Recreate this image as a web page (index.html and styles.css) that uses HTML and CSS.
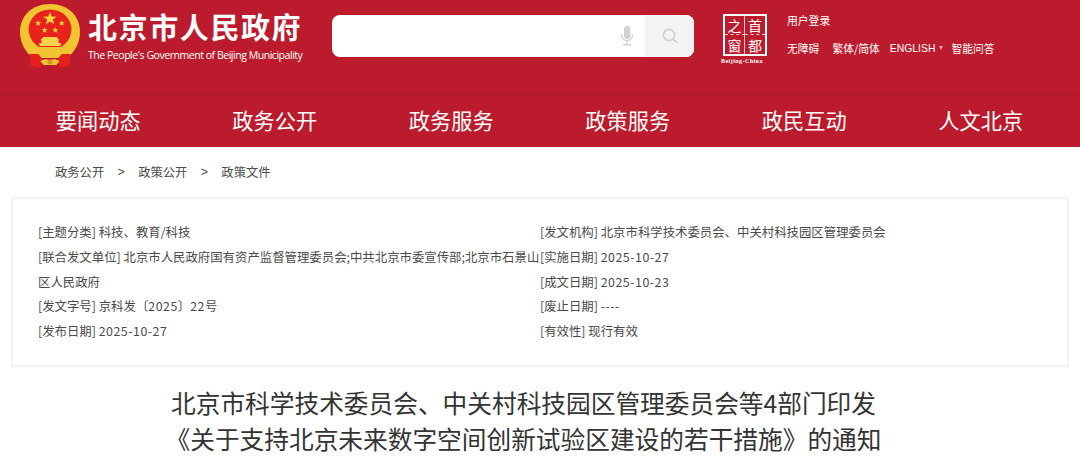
FILE: index.html
```html
<!DOCTYPE html>
<html lang="zh-CN">

<head>
    <meta charset="utf-8">
    <title>北京市人民政府</title>
    <meta name="viewport" content="width=device-width, initial-scale=1">
    <link rel="stylesheet" href="styles.css">
</head>

<body>
    <header class="top-bar">
        <a class="brand" href="#">
            <svg class="emblem" viewBox="2 0 56 64" width="60" height="64" preserveAspectRatio="none">
                <path d="M30 0C13 0 2 12 2 28c0 11 5 20 12 26h32c7-6 12-15 12-26C58 12 47 0 30 0z" fill="#f2c431" />
                <ellipse cx="30" cy="25.5" rx="20" ry="20" fill="#e8231b" />
                <polygon points="30,8 31.6,12.6 36.4,12.7 32.6,15.6 34,20.2 30,17.5 26,20.2 27.4,15.6 23.6,12.7 28.4,12.6" fill="#f8d83c" />
                <polygon points="19,16 19.8,18.2 22,18.2 20.2,19.6 20.9,21.8 19,20.5 17.1,21.8 17.8,19.6 16,18.2 18.2,18.2" fill="#f8d83c" />
                <polygon points="41,16 41.8,18.2 44,18.2 42.2,19.6 42.9,21.8 41,20.5 39.1,21.8 39.8,19.6 38,18.2 40.2,18.2" fill="#f8d83c" />
                <polygon points="25,23 25.8,25.2 28,25.2 26.2,26.6 26.9,28.8 25,27.5 23.1,28.8 23.8,26.6 22,25.2 24.2,25.2" fill="#f8d83c" />
                <polygon points="35,23 35.8,25.2 38,25.2 36.2,26.6 36.9,28.8 35,27.5 33.1,28.8 33.8,26.6 32,25.2 34.2,25.2" fill="#f8d83c" />
                <path d="M24 33h12l3 3h-1v3h2v3H20v-3h2v-3h-1z" fill="#f8d24a" />
                <path d="M7 41l8 2h30l8-2-3 7-8 3H18l-8-3z" fill="#f2c431" />
                <path d="M11 50h8l4 5-2 9-9-2zM49 50h-8l-4 5 2 9 9-2z" fill="#e2201c" />
                <path d="M19 49c3-3 8-4 11-4s8 1 11 4l-4 4H23z" fill="#f2c431" />
                <path d="M21 57c3-2 6-2 9-1 3-1 6-1 9 1l-3 4H24z" fill="#f2c431" />
                <circle cx="30" cy="58" r="2.5" fill="#d8971f" />
            </svg>
            <div class="brand-text">
                <div class="brand-cn">北京市人民政府</div>
                <div class="brand-en">The People's Government of Beijing Municipality</div>
            </div>
        </a>

        <form class="search">
            <div class="search-field">
                <svg viewBox="0 0 14 20" width="14" height="20">
                    <rect x="4" y="0" width="6.4" height="13" rx="3.2" fill="#d2d2d2" />
                    <path d="M1.5 8.5c0 8 11 8 11 0" fill="none" stroke="#d2d2d2" stroke-width="1.4" />
                    <rect x="6.3" y="15" width="1.4" height="3" fill="#d2d2d2" />
                    <rect x="3" y="18" width="8" height="1.6" fill="#d2d2d2" />
                </svg>
            </div>
            <div class="search-btn">
                <svg viewBox="0 0 18 18" width="18" height="18">
                    <circle cx="8" cy="8" r="5.6" fill="none" stroke="#cfcfcf" stroke-width="1.7" />
                    <path d="M12.2 12.2l4 3.3" stroke="#cfcfcf" stroke-width="1.9" fill="none" />
                </svg>
            </div>
        </form>

        <div class="capital">
            <div class="capital-box">
                <span>之</span><span>首</span><span>窗</span><span>都</span>
            </div>
            <div class="capital-en">Beijing-China</div>
        </div>

        <div class="links">
            <a href="#">用户登录</a>
            <div class="links-row">
                <a href="#">无障碍</a>
                <a href="#">繁体/简体</a>
                <a href="#" class="lang">ENGLISH<i class="caret"></i></a>
                <a href="#">智能问答</a>
            </div>
        </div>
    </header>

    <nav class="main-nav">
        <a href="#">要闻动态</a>
        <a href="#">政务公开</a>
        <a href="#">政务服务</a>
        <a href="#">政策服务</a>
        <a href="#">政民互动</a>
        <a href="#">人文北京</a>
    </nav>

    <div class="crumbs">
        <a href="#">政务公开</a>
        <span>&gt;</span>
        <a href="#">政策公开</a>
        <span>&gt;</span>
        <a href="#">政策文件</a>
    </div>

    <section class="doc-info">
        <ul class="info-col">
            <li>[主题分类] 科技、教育/科技</li>
            <li>[联合发文单位] 北京市人民政府国有资产监督管理委员会;中共北京市委宣传部;北京市石景山区人民政府</li>
            <li>[发文字号] 京科发〔<span class="num">2025</span>〕<span class="num">22</span>号</li>
            <li>[发布日期] <span class="num">2025-10-27</span></li>
        </ul>
        <ul class="info-col">
            <li>[发文机构] 北京市科学技术委员会、中关村科技园区管理委员会</li>
            <li>[实施日期] <span class="num">2025-10-27</span></li>
            <li>[成文日期] <span class="num">2025-10-23</span></li>
            <li>[废止日期] <span class="num">----</span></li>
            <li>[有效性] 现行有效</li>
        </ul>
    </section>

    <h1 class="doc-title">北京市科学技术委员会、中关村科技园区管理委员会等4部门印发<br>《关于支持北京未来数字空间创新试验区建设的若干措施》的通知</h1>
</body>

</html>
```

FILE: styles.css
```css
* {
    margin: 0;
    padding: 0;
    box-sizing: border-box;
}

html {
    overflow: hidden;
}

body {
    font: 12px "Noto Sans CJK SC", "Noto Sans", sans-serif;
    color: #4a4a4a;
    background: #fff;
}

a {
    color: inherit;
    text-decoration: none;
}

ul {
    list-style: none;
}

.top-bar {
    height: 95px;
    background: #bc1b2d;
    border-bottom: 1px solid #aa1929;
    display: flex;
    align-items: flex-start;
    color: #fff;
    padding: 4px 0 0 20px;
}

.brand {
    display: flex;
    width: 312px;
    flex-shrink: 0;
}

.emblem {
    flex-shrink: 0;
}

.brand-text {
    margin-left: 8px;
}

.brand-cn {
    font-size: 29px;
    font-weight: 700;
    line-height: 36px;
    letter-spacing: 1.6px;
    margin-top: 4px;
}

.brand-en {
    font: 10.5px/14px "Open Sans", sans-serif;
    letter-spacing: -.46px;
    margin-top: 4px;
    white-space: nowrap;
}

.search {
    width: 362px;
    height: 42px;
    margin-top: 11px;
    background: #fff;
    border-radius: 8px;
    overflow: hidden;
    display: flex;
    flex-shrink: 0;
}

.search-field {
    flex: 1;
    display: flex;
    align-items: center;
    justify-content: flex-end;
    padding-right: 11px;
}

.search-btn {
    width: 49px;
    background: #f3f3f3;
    display: flex;
    align-items: center;
    justify-content: center;
}

.capital {
    margin: 10px 0 0 27px;
    width: 50px;
    flex-shrink: 0;
}

.capital-box {
    width: 44px;
    height: 42px;
    margin-left: 2px;
    border: 2px solid #fff;
    display: grid;
    grid-template-columns: 1fr 1fr;
    grid-template-rows: 1fr 1fr;
    font: 14px/18px "Noto Sans CJK SC", serif;
}

.capital-box span {
    display: flex;
    align-items: center;
    justify-content: center;
}

.capital-box span:nth-child(odd) {
    border-right: 1px solid #f3cfd3;
}

.capital-box span:nth-child(-n+2) {
    border-bottom: 1px dashed #f3cfd3;
}

.capital-en {
    font: 700 6px/8px "Liberation Serif", serif;
    letter-spacing: .45px;
    white-space: nowrap;
    margin-top: 1px;
}

.links {
    margin: 8px 0 0 16px;
    font-size: 10.8px;
    line-height: 16px;
}

.links-row {
    display: flex;
    margin-top: 12px;
    white-space: nowrap;
}

.links-row a {
    margin-right: 13px;
}

.links-row .lang {
    font-family: "Liberation Sans", sans-serif;
    font-size: 10.4px;
    margin: 0 8px 0 -3px;
    padding-top: 1px;
}

.caret {
    display: inline-block;
    margin-left: 4px;
    vertical-align: 2px;
    border: 2.5px solid transparent;
    border-top: 4px solid #e8a3ab;
    border-bottom: 0;
}

.main-nav {
    height: 52px;
    background: #bc1b2d;
    color: #fff;
    display: flex;
    padding: 0 11px 0 10px;
    font-size: 21.2px;
    line-height: 50px;
}

.main-nav a {
    flex: 1;
    text-align: center;
}

.crumbs {
    display: flex;
    gap: 12.4px;
    padding-left: 55px;
    height: 50px;
    align-items: center;
    font-size: 12.3px;
    line-height: 16px;
}

.crumbs span {
    font-family: "Liberation Sans", sans-serif;
    margin: 0 1px;
}

.doc-info {
    margin: 0 11px;
    height: 170px;
    border: 2px solid #f3f3ef;
    display: flex;
    padding: 21px 25px 0;
    font-size: 12.4px;
    line-height: 24.8px;
}

.info-col:first-child {
    width: 502px;
    flex-shrink: 0;
}

.num {
    letter-spacing: .5px;
}

.doc-title {
    font-size: 24.7px;
    font-weight: 400;
    line-height: 35.5px;
    color: #333;
    text-align: center;
    margin-top: 18px;
    padding-right: 33px;
    white-space: nowrap;
}
```
